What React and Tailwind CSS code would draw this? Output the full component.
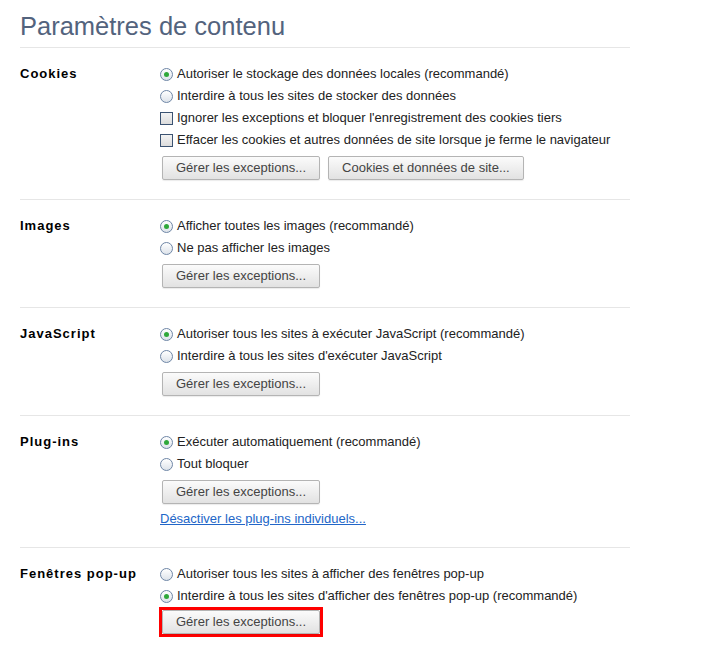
import React from 'react';

const Radio = ({ checked }) => (
  <span className="mr-[4px] flex h-[13px] w-[13px] shrink-0 items-center justify-center rounded-full border border-[#6e86a6] bg-linear-to-b from-white to-[#dde3ea]">
    {checked && <span className="h-[5px] w-[5px] rounded-full bg-[#2fa83a]" />}
  </span>
);

const Checkbox = () => (
  <span className="mr-[4px] h-[13px] w-[13px] shrink-0 border border-[#3b5372] bg-linear-to-b from-[#f4f4f4] to-[#dcdcdc]" />
);

const Option = ({ type, checked, children }) => (
  <div className="flex h-[22px] items-center">
    {type === 'radio' ? <Radio checked={checked} /> : <Checkbox />}
    <span>{children}</span>
  </div>
);

const Button = ({ children }) => (
  <button
    type="button"
    className="h-[24px] rounded-[2px] border border-[#b4b4b4] bg-linear-to-b from-[#fbfbfb] to-[#e2e2e2] px-[13px] text-[13px] leading-[22px] text-[#444] shadow-[0_1px_1px_rgba(0,0,0,0.08)]"
  >
    {children}
  </button>
);

const Section = ({ title, last, pb = 'pb-[19px]', children }) => (
  <section className={`flex pt-[15px] ${pb} ${last ? '' : 'border-b border-[#e6e6e6]'}`}>
    <div className="w-[140px] shrink-0 font-bold leading-[22px] tracking-[1px] text-black">{title}</div>
    <div className="flex flex-col">{children}</div>
  </section>
);

const App = () => {
  return (
    <div className="min-h-[649px] bg-white pl-[20px] font-['Liberation_Sans',Arial,sans-serif] text-[13px] text-[#222]">
      <div className="w-[610px]">
        <h1 className="border-b border-[#e6e6e6] pt-[11px] pb-[6px] text-[25.5px] leading-[30px] font-normal text-[#53637d]">
          Paramètres de contenu
        </h1>

        <Section title="Cookies">
          <Option type="radio" checked>Autoriser le stockage des données locales (recommandé)</Option>
          <Option type="radio">Interdire à tous les sites de stocker des données</Option>
          <Option type="checkbox">Ignorer les exceptions et bloquer l'enregistrement des cookies tiers</Option>
          <Option type="checkbox">Effacer les cookies et autres données de site lorsque je ferme le navigateur</Option>
          <div className="mt-[5px] ml-[2px] flex gap-[8px]">
            <Button>Gérer les exceptions...</Button>
            <Button>Cookies et données de site...</Button>
          </div>
        </Section>

        <Section title="Images">
          <Option type="radio" checked>Afficher toutes les images (recommandé)</Option>
          <Option type="radio">Ne pas afficher les images</Option>
          <div className="mt-[5px] ml-[2px] flex">
            <Button>Gérer les exceptions...</Button>
          </div>
        </Section>

        <Section title="JavaScript">
          <Option type="radio" checked>Autoriser tous les sites à exécuter JavaScript (recommandé)</Option>
          <Option type="radio">Interdire à tous les sites d'exécuter JavaScript</Option>
          <div className="mt-[5px] ml-[2px] flex">
            <Button>Gérer les exceptions...</Button>
          </div>
        </Section>

        <Section title="Plug-ins" pb="pb-[17px]">
          <Option type="radio" checked>Exécuter automatiquement (recommandé)</Option>
          <Option type="radio">Tout bloquer</Option>
          <div className="mt-[5px] ml-[2px] flex">
            <Button>Gérer les exceptions...</Button>
          </div>
          <a href="#" className="mt-[4px] leading-[22px] text-[#2266c8] underline">
            Désactiver les plug-ins individuels...
          </a>
        </Section>

        <Section title="Fenêtres pop-up" last pb="pb-[12px]">
          <Option type="radio">Autoriser tous les sites à afficher des fenêtres pop-up</Option>
          <Option type="radio" checked>Interdire à tous les sites d'afficher des fenêtres pop-up (recommandé)</Option>
          <div className="ml-[-1px] flex">
            <div className="border-[3px] border-[#f00]">
              <Button>Gérer les exceptions...</Button>
            </div>
          </div>
        </Section>
      </div>
    </div>
  );
};

export default App;
